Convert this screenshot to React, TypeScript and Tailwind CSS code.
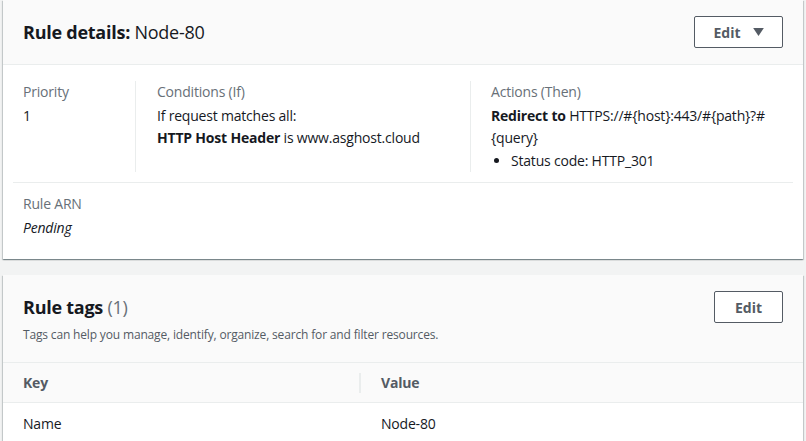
export default function App() {
  return (
    <div
      className="w-[806px] h-[441px] overflow-hidden bg-[#f2f3f3] text-[#16191f]"
      style={{ fontFamily: "'Open Sans', 'Noto Sans', sans-serif" }}
    >
      {/* Rule details card */}
      <div className="ml-[3px] mr-[3px] bg-white shadow-[0_1px_1px_0_rgba(0,28,36,0.3),1px_1px_1px_0_rgba(0,28,36,0.15),-1px_1px_1px_0_rgba(0,28,36,0.15)]">
        <div className="h-[65px] bg-[#fafafa] border-b border-[#eaeded] flex items-center justify-between pl-[20px] pr-[20px]">
          <h2 className="text-[18px] leading-[22px] tracking-[-0.25px]">
            <span className="font-bold">Rule details:</span> Node-80
          </h2>
          <button className="h-[32px] w-[89px] border border-[#545b64] rounded-[2px] bg-white text-[#545b64] text-[14px] font-bold flex items-center justify-center gap-[12px]">
            Edit
            <svg width="11" height="8" viewBox="0 0 12 9">
              <path d="M0 0h12L6 9z" fill="#545b64" />
            </svg>
          </button>
        </div>
        <div className="px-[10px] pt-[16px] text-[14px] leading-[22px] tracking-[-0.2px]">
          <div className="grid grid-cols-[123px_335px_1fr] pb-[10px] border-b border-[#eaeded]">
            <div className="pl-[10px] pr-[20px] border-r border-[#eaeded]">
              <div className="text-[#687078] mb-[2px]">Priority</div>
              <div>1</div>
            </div>
            <div className="pl-[21px] pr-[20px] border-r border-[#eaeded]">
              <div className="text-[#687078] mb-[2px]">Conditions (If)</div>
              <div>If request matches all:</div>
              <div>
                <span className="font-bold">HTTP Host Header</span> is www.asghost.cloud
              </div>
            </div>
            <div className="pl-[20px] pr-[20px]">
              <div className="text-[#687078] mb-[2px]">Actions (Then)</div>
              <div>
                <span className="font-bold">Redirect to</span> HTTPS://#{"{host}"}:443/#{"{path}"}?#{"{query}"}
              </div>
              <ul className="list-disc pl-[20px] mt-[1px]">
                <li>Status code: HTTP_301</li>
              </ul>
            </div>
          </div>
          <div className="pl-[10px] pt-[10px] pb-[20px]">
            <div className="text-[#687078] mb-[2px]">Rule ARN</div>
            <div className="italic">Pending</div>
          </div>
        </div>
      </div>

      {/* Rule tags card */}
      <div className="mt-[16px] ml-[3px] mr-[3px] bg-white shadow-[0_1px_1px_0_rgba(0,28,36,0.3),1px_1px_1px_0_rgba(0,28,36,0.15),-1px_1px_1px_0_rgba(0,28,36,0.15)]">
        <div className="bg-[#fafafa] border-b border-[#eaeded] pl-[20px] pr-[20px] pt-[16px] pb-[19px]">
          <div className="flex items-center justify-between">
            <h2 className="text-[18px] leading-[26px] font-bold tracking-[-0.25px]">
              Rule tags <span className="font-normal text-[#687078]">(1)</span>
            </h2>
            <button className="h-[32px] w-[69px] border border-[#545b64] rounded-[2px] bg-white text-[#545b64] text-[14px] font-bold">
              Edit
            </button>
          </div>
          <p className="text-[12px] leading-[16px] text-[#545b64] mt-[4px] tracking-[-0.16px]">
            Tags can help you manage, identify, organize, search for and filter resources.
          </p>
        </div>
        <div className="grid grid-cols-[358px_1fr] h-[40px] bg-[#fafafa] border-b border-[#eaeded] text-[14px] font-bold text-[#545b64] items-center tracking-[-0.2px]">
          <div className="pl-[20px] border-r-2 border-[#eaeded] h-[20px] flex items-center">Key</div>
          <div className="pl-[20px]">Value</div>
        </div>
        <div className="grid grid-cols-[358px_1fr] h-[40px] text-[14px] items-center tracking-[-0.2px]">
          <div className="pl-[20px]">Name</div>
          <div className="pl-[20px]">Node-80</div>
        </div>
      </div>
    </div>
  );
}
